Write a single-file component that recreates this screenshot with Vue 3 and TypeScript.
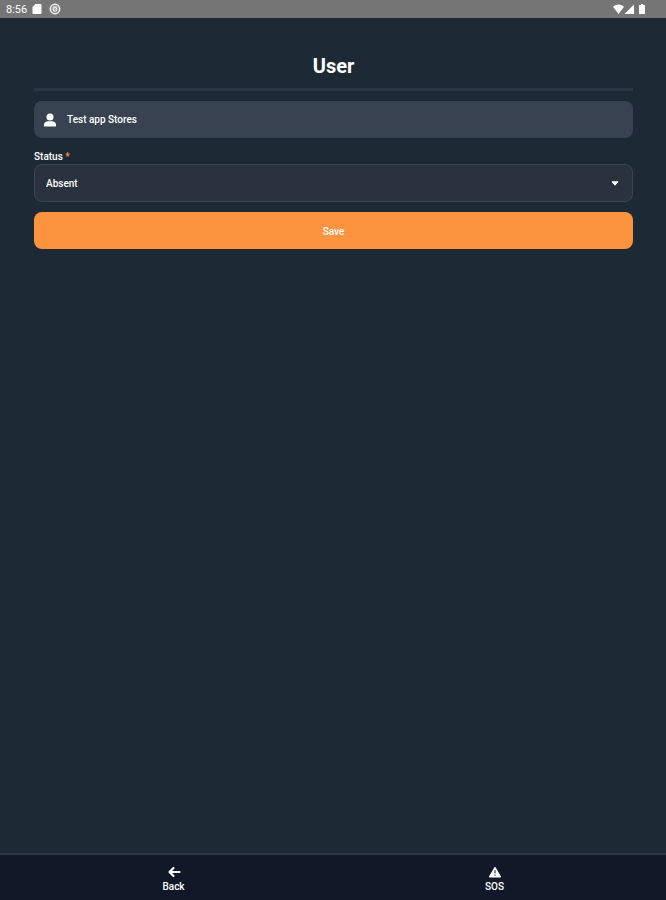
<script setup lang="ts">
import { ref } from 'vue'

const status = ref<string>('Absent')
const statuses: string[] = ['Absent', 'Present']
</script>

<template>
  <div class="screen">
    <header class="statusbar">
      <span class="clock">8:56</span>
      <svg class="sys" viewBox="0 0 12 12" aria-hidden="true">
        <path d="M4.500 1H9.500a1 1 0 0 1 1 1v8a1 1 0 0 1-1 1H2.500a1 1 0 0 1-1-1V4z" fill="#fff" />
        <path d="M5 2.200v1.600M6.700 2.200v1.600M8.400 2.200v1.600" stroke="#ccc" stroke-width=".6" />
      </svg>
      <svg class="sys ring" viewBox="0 0 12 12" aria-hidden="true">
        <circle cx="6" cy="6" r="4.700" fill="#8c8c8c" stroke="#f2f2f2" stroke-width="1.500" />
        <circle cx="6" cy="6.300" r="1.900" fill="#aaa" stroke="#f2f2f2" stroke-width="1.100" />
        <path d="M4 3.800h4" stroke="#ddd" stroke-width=".8" />
      </svg>
      <svg class="signals" viewBox="0 0 36 12" aria-hidden="true">
        <path d="M1 3.800Q6.500-.6 12 3.800L6.500 11z" fill="#fff" />
        <path d="M22 1.500V11H12.500z" fill="#fff" />
        <path d="M29 1h2v1h1.500a.5.5 0 0 1 .5.5v8a.5.5 0 0 1-.5.5h-5a.5.5 0 0 1-.5-.5v-8a.5.5 0 0 1 .5-.5H29z" fill="#fff" />
      </svg>
    </header>

    <main class="content">
      <h1 class="title">User</h1>
      <div class="user">
        <svg class="person" viewBox="0 0 14 14" aria-hidden="true">
          <circle cx="7" cy="3.900" r="3.500" fill="#fff" />
          <path d="M1 13.500V12C1 9.600 2.800 8.300 5 8.300h4c2.200 0 4 1.300 4 3.700v1.500z" fill="#fff" />
        </svg>
        <span>Test app Stores</span>
      </div>
      <form class="form" @submit.prevent>
        <label class="label" for="status">Status <span class="required">*</span></label>
        <div class="field">
          <select id="status" v-model="status" class="select" required>
            <option v-for="s in statuses" :key="s" :value="s">{{ s }}</option>
          </select>
          <svg class="caret" viewBox="0 0 8 5" aria-hidden="true">
            <path d="M1 .8h6L4 4.200z" fill="#fff" stroke="#fff" stroke-linejoin="round" />
          </svg>
        </div>
        <button class="save" type="submit">Save</button>
      </form>
    </main>

    <nav class="nav">
      <a class="item" href="#back">
        <svg class="icon" viewBox="0 0 14 12" aria-hidden="true">
          <path d="M12.500 6H3M6.500 2L2.500 6l4 4" fill="none" stroke="#fff" stroke-width="2.200" stroke-linecap="round" stroke-linejoin="round" />
        </svg>
        <span>Back</span>
      </a>
      <a class="item" href="#sos">
        <svg class="icon" viewBox="0 0 14 12" aria-hidden="true">
          <path d="M7 1.200L12.800 11H1.200z" fill="#fff" stroke="#fff" stroke-linejoin="round" />
          <path d="M7 4.200v3.300M7 8.600v1.200" stroke="#111827" />
        </svg>
        <span>SOS</span>
      </a>
    </nav>
  </div>
</template>

<style>
body {
  margin: 0;
  background: #1f2937;
}
</style>

<style scoped>
.screen {
  display: flex;
  flex-direction: column;
  min-height: 100vh;
  box-sizing: border-box;
  background: #1e2936;
  color: #fff;
  font: 500 10px/14px Roboto, "Liberation Sans", sans-serif;
}
.statusbar {
  display: flex;
  align-items: center;
  height: 18px;
  padding: 0 18px 0 6px;
  background: #757575;
}
.clock {
  font-weight: 400;
  font-size: 11px;
  padding-top: 2px;
}
.sys {
  width: 12px;
  height: 12px;
  margin-left: 4px;
}
.ring {
  margin-left: 6px;
}
.signals {
  width: 36px;
  height: 12px;
  margin-left: auto;
}
.content {
  flex: 1;
  padding: 34px 33px 24px 34px;
}
.title {
  margin: 0 0 10px;
  padding-bottom: 8px;
  border-bottom: 3px solid #2c3745;
  font-size: 20px;
  line-height: 28px;
  font-weight: 700;
  text-align: center;
}
.user {
  display: flex;
  align-items: center;
  gap: 10px;
  height: 37px;
  padding: 0 9px;
  border-radius: 8px;
  background: #384250;
}
.person {
  width: 14px;
  height: 14px;
}
.form {
  display: flex;
  flex-direction: column;
  margin-top: 12px;
}
.label {
  font-weight: 500;
}
.required {
  color: #fb923c;
}
.field {
  display: grid;
  align-items: center;
}
.select {
  grid-area: 1 / 1;
  width: 100%;
  height: 38px;
  padding: 2px 11px 0;
  border: 1px solid #3b4654;
  border-radius: 8px;
  background: #2a3240;
  color: #fff;
  font: inherit;
  appearance: none;
}
.caret {
  grid-area: 1 / 1;
  justify-self: end;
  width: 8px;
  height: 5px;
  margin-right: 14px;
  pointer-events: none;
}
.save {
  height: 37px;
  margin-top: 10px;
  padding: 2px 12px 0;
  border: 0;
  border-radius: 8px;
  background: #fc943f;
  color: #fff;
  font: inherit;
}
.nav {
  display: grid;
  grid-template-columns: 1fr 1fr;
  padding: 11px 11px 6px 13px;
  border-top: 2px solid #2c3745;
  background: #111827;
}
.item {
  display: flex;
  flex-direction: column;
  align-items: center;
  gap: 2px;
  color: #fff;
  text-decoration: none;
}
.icon {
  width: 14px;
  height: 12px;
}
</style>
